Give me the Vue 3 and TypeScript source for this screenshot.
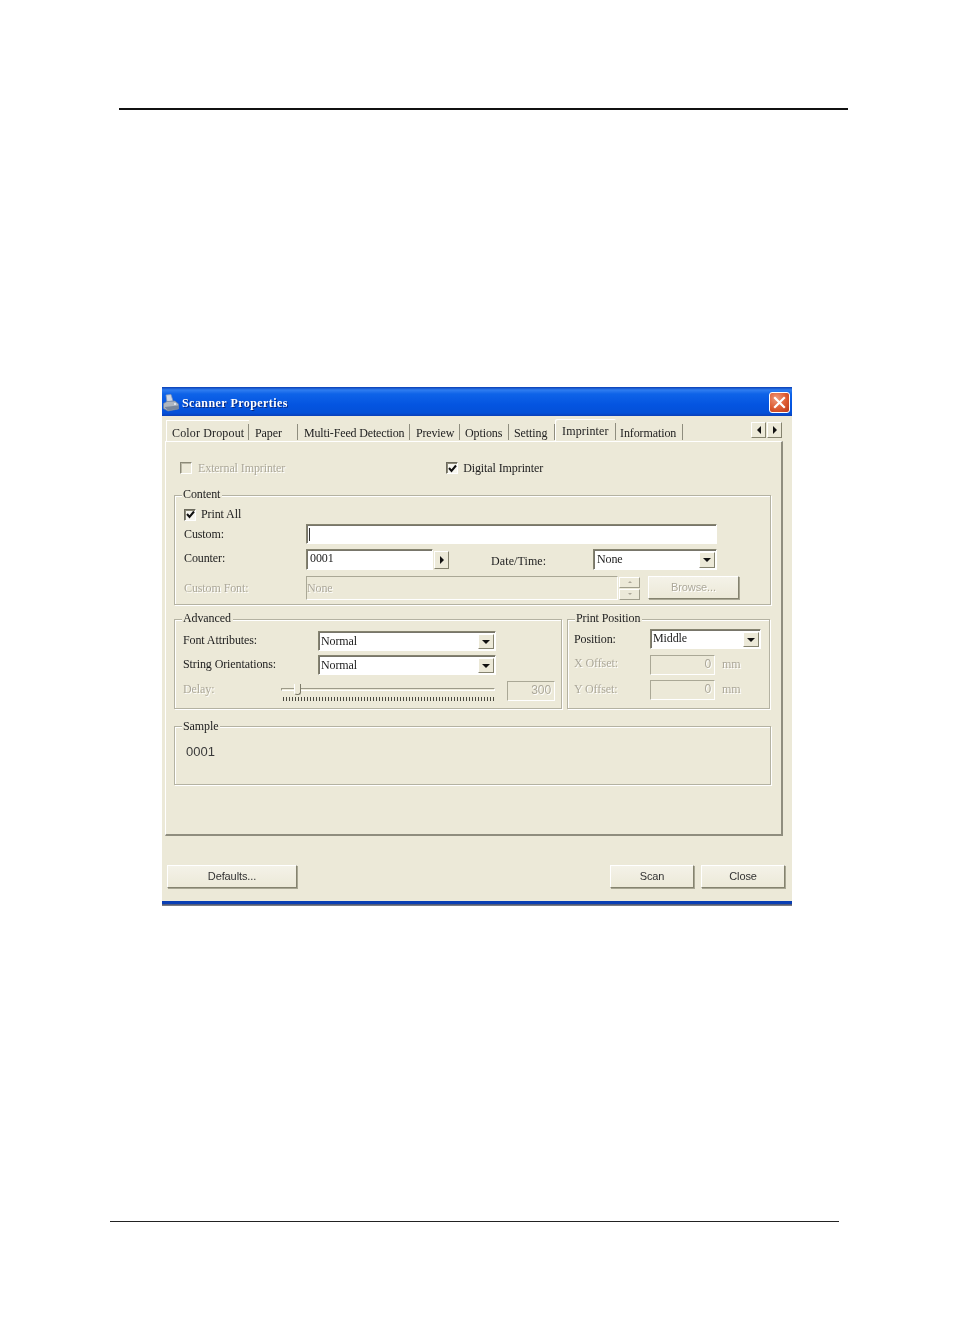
<script setup lang="ts">
interface Tab { label: string; width: number; pad: number; spacing: number; active?: boolean }
const tabs: Tab[] = [
  { label: 'Color Dropout', width: 83, pad: 6, spacing: 0.15 },
  { label: 'Paper', width: 49, pad: 6, spacing: -0.1 },
  { label: 'Multi-Feed Detection', width: 112, pad: 6, spacing: -0.16 },
  { label: 'Preview', width: 50, pad: 6, spacing: -0.16 },
  { label: 'Options', width: 49, pad: 5, spacing: -0.1 },
  { label: 'Setting', width: 46, pad: 5, spacing: -0.1 },
  { label: 'Imprinter', width: 61, pad: 7, spacing: 0.15, active: true },
  { label: 'Information', width: 67, pad: 4, spacing: -0.1 },
]
</script>

<template>
  <div class="page">
    <div class="top-rule"></div>
    <div class="dialog">
      <div class="titlebar">
        <svg class="app-icon" width="16" height="18" viewBox="0 0 16 18">
          <path d="M3 1 L8 0.5 L10 7 L4 8 Z" fill="#cfd6e2" stroke="#8a9ab5" stroke-width=".7" />
          <path d="M0.5 9.5 L4 7.5 L12 7 L15.5 10 L15.5 15 L5 17 L0.5 14.5 Z" fill="#aeb6c0" stroke="#71829c" stroke-width=".7" />
          <path d="M1.5 13 L15 11.5 L15 15 L5 16.5 Z" fill="#78879c" />
          <circle cx="12" cy="10" r="1" fill="#eef2f8" />
        </svg>
        <span class="title">Scanner Properties</span>
        <button class="close" aria-label="Close">
          <svg width="13" height="13" viewBox="0 0 13 13">
            <path d="M2 2 L11 11 M11 2 L2 11" stroke="#fff" stroke-width="2.2" stroke-linecap="square" />
          </svg>
        </button>
      </div>

      <div class="tabs">
        <div
          v-for="t in tabs"
          :key="t.label"
          class="tab"
          :class="{ active: t.active }"
          :style="{ width: t.width + 'px', paddingLeft: t.pad + 'px', letterSpacing: t.spacing + 'px' }"
        >{{ t.label }}</div>
        <div class="tab-scroll">
          <span class="mini-btn"><i class="tri-left"></i></span>
          <span class="mini-btn"><i class="tri-right"></i></span>
        </div>
      </div>

      <div class="panel">
        <div class="top-row">
          <label class="check disabled external"><span class="box"></span>External Imprinter</label>
          <label class="check digital"><span class="box on"><svg width="9" height="9" viewBox="0 0 9 9"><path d="M1 4 L3.5 7 L8 1.5" fill="none" stroke="#111" stroke-width="2" /></svg></span>Digital Imprinter</label>
        </div>

        <section class="group content">
          <span class="legend">Content</span>
          <label class="check printall"><span class="box on"><svg width="9" height="9" viewBox="0 0 9 9"><path d="M1 4 L3.5 7 L8 1.5" fill="none" stroke="#111" stroke-width="2" /></svg></span>Print All</label>
          <div class="row row-custom">
            <span class="lbl">Custom:</span>
            <div class="field white custom-field"><i class="caret"></i></div>
          </div>
          <div class="row row-counter">
            <span class="lbl">Counter:</span>
            <div class="field white counter-field">0001</div>
            <span class="mini-btn counter-btn"><i class="tri-right"></i></span>
            <span class="lbl date-lbl">Date/Time:</span>
            <div class="field white select date-select">None<span class="drop"><i class="tri-down"></i></span></div>
          </div>
          <div class="row row-font">
            <span class="lbl disabled">Custom Font:</span>
            <div class="field flat font-field">None</div>
            <div class="spin">
              <span class="spin-btn"><i class="tri-up"></i></span>
              <span class="spin-btn"><i class="tri-down small"></i></span>
            </div>
            <span class="btn browse">Browse...</span>
          </div>
        </section>

        <div class="split">
          <section class="group advanced">
            <span class="legend">Advanced</span>
            <div class="row row-adv">
              <span class="lbl adv-lbl">Font Attributes:</span>
              <div class="field white select adv-select">Normal<span class="drop"><i class="tri-down"></i></span></div>
            </div>
            <div class="row row-adv second">
              <span class="lbl adv-lbl">String Orientations:</span>
              <div class="field white select adv-select">Normal<span class="drop"><i class="tri-down"></i></span></div>
            </div>
            <div class="row row-delay">
              <span class="lbl disabled delay-lbl">Delay:</span>
              <div class="slider">
                <span class="track"></span>
                <span class="thumb"></span>
                <span class="ticks"></span>
              </div>
              <div class="field flat num delay-field">300</div>
            </div>
          </section>

          <section class="group position">
            <span class="legend">Print Position</span>
            <div class="row row-pos">
              <span class="lbl pos-lbl">Position:</span>
              <div class="field white select pos-select">Middle<span class="drop"><i class="tri-down"></i></span></div>
            </div>
            <div class="row row-off first">
              <span class="lbl disabled pos-lbl off-lbl">X Offset:</span>
              <div class="field flat num off-field">0</div>
              <span class="unit">mm</span>
            </div>
            <div class="row row-off">
              <span class="lbl disabled pos-lbl off-lbl">Y Offset:</span>
              <div class="field flat num off-field">0</div>
              <span class="unit">mm</span>
            </div>
          </section>
        </div>

        <section class="group sample">
          <span class="legend">Sample</span>
          <div class="sample-text">0001</div>
        </section>
      </div>

      <div class="footer">
        <span class="btn defaults">Defaults...</span>
        <span class="spacer"></span>
        <span class="btn scan">Scan</span>
        <span class="btn closebtn">Close</span>
      </div>
      <div class="bottom-bar"></div>
    </div>
    <div class="bottom-rule"></div>
  </div>
</template>

<style>
html, body { margin: 0; background: #fff; }
</style>

<style scoped>
.page {
  width: 954px;
  height: 1336px;
  box-sizing: border-box;
  padding-top: 108px;
  overflow: hidden;
  background: #fff;
}
.top-rule { width: 729px; height: 2px; margin-left: 119px; background: #111; }
.bottom-rule { width: 729px; height: 1px; margin: 315px 0 0 110px; background: #222; }

.dialog {
  width: 630px;
  height: 519px;
  margin: 277px 0 0 162px;
  background: #ece9d8;
  display: flex;
  flex-direction: column;
  font: 12px "Liberation Serif", serif;
  letter-spacing: -0.1px;
  color: #222;
  filter: blur(0.35px);
}

.titlebar {
  height: 29px;
  flex: none;
  display: flex;
  align-items: center;
  background: linear-gradient(#0a3fb4 0, #2f7df0 3px, #0e63e8 7px, #0454e0 18px, #0450d8 26px, #0a3fb8 29px);
}
.app-icon { margin: 3px 3px 0 1px; flex: none; }
.title {
  margin-top: 4px;
  color: #fff;
  font-weight: 700;
  font-size: 12px;
  letter-spacing: 0.45px;
  text-shadow: 1px 1px 0 #0a2a80;
}
.close {
  margin: 1px 2px 0 auto;
  width: 21px;
  height: 21px;
  padding: 0;
  display: flex;
  align-items: center;
  justify-content: center;
  border: 1px solid #fff;
  border-radius: 3px;
  background: radial-gradient(circle at 35% 30%, #ef9a7c, #dc5a30 55%, #b8371b);
}

.tabs {
  height: 21px;
  margin-top: 4px;
  padding-left: 4px;
  flex: none;
  display: flex;
  align-items: stretch;
  position: relative;
}
.tab {
  box-sizing: border-box;
  padding-top: 7px;
  line-height: 13px;
  white-space: nowrap;
  position: relative;
}
.tab::after {
  content: "";
  position: absolute;
  right: 0;
  top: 4px;
  bottom: 1px;
  width: 1px;
  background: #8f8d7e;
}
.tab.active {
  padding-top: 6px;
  margin-top: -1px;
  border-radius: 2px 2px 0 0;
  box-shadow: inset 1px 1px 0 #fff;
}
.tab:first-child { box-shadow: inset 1px 1px 0 #fff; }
.tab-scroll {
  position: absolute;
  left: 589px;
  top: 2px;
  display: flex;
  gap: 1px;
}
.mini-btn {
  box-sizing: border-box;
  width: 15px;
  height: 16px;
  display: flex;
  align-items: center;
  justify-content: center;
  background: #ece9d8;
  border: 1px solid;
  border-color: #fff #85836f #85836f #fff;
}
i { display: block; width: 0; height: 0; border-style: solid; border-color: transparent; }
.tri-left { border-width: 4px 4px 4px 0; border-right-color: #111; }
.tri-right { border-width: 4px 0 4px 4px; border-left-color: #111; }
.tri-down { border-width: 4px 4px 0; border-top-color: #111; }
.tri-down.small { border-width: 2px 2px 0; border-top-color: #aca899; }
.tri-up { border-width: 0 2px 2px; border-bottom-color: #aca899; }

.panel {
  box-sizing: border-box;
  width: 618px;
  height: 395px;
  margin-left: 3px;
  flex: none;
  padding: 18px 0 0 8px;
  border-top: 1px solid #fff;
  border-left: 1px solid #fff;
  border-right: 2px solid #8f8d7e;
  border-bottom: 2px solid #8f8d7e;
}

.top-row { height: 16px; display: flex; align-items: center; position: relative; }
.check { display: flex; align-items: center; white-space: nowrap; }
.external { margin-left: 6px; }
.digital { margin-left: 161px; }
.disabled { color: #aca899; text-shadow: 1px 1px 0 #fff; }
.box {
  box-sizing: border-box;
  width: 12px;
  height: 12px;
  margin-right: 6px;
  display: flex;
  align-items: center;
  justify-content: center;
  border: 1px solid;
  border-color: #8b8977 #fff #fff #8b8977;
  box-shadow: inset 1px 1px 0 #bdbaa8;
  flex: none;
}
.box.on { background: #f7f6ef; border-color: #6c6a5d #fff #fff #6c6a5d; box-shadow: inset 1px 1px 0 #8b8977; margin-right: 5px; }

.group {
  box-sizing: border-box;
  position: relative;
  border: 1px solid #b4b2a2;
  box-shadow: 1px 1px 0 #fff, inset 1px 1px 0 #fff;
}
.legend {
  position: absolute;
  left: 7px;
  top: -9px;
  padding: 0 2px 0 1px;
  line-height: 14px;
  background: #ece9d8;
}
.sample .legend { top: -8px; }

.row { display: flex; align-items: center; }
.lbl { white-space: nowrap; flex: none; }

.content { width: 597px; height: 110px; margin-top: 19px; padding: 12px 0 0 9px; }
.printall { height: 13px; }
.printall .box { margin-right: 5px; }
.row-custom { height: 20px; margin-top: 3px; }
.row-custom .lbl, .row-counter > .lbl:first-child, .row-font .lbl { width: 122px; }
.row-counter > .lbl:first-child { margin-bottom: 2px; }
.row-counter { height: 21px; margin-top: 5px; }
.row-font { height: 24px; margin-top: 6px; }

.field {
  box-sizing: border-box;
  height: 100%;
  padding-left: 2px;
  display: flex;
  align-items: center;
  border: 1px solid;
  border-color: #85836f #fff #fff #85836f;
  box-shadow: inset 1px 1px 0 #77756a;
  white-space: nowrap;
  position: relative;
}
.white { background: #fff; }
.flat {
  color: #aca899;
  text-shadow: 1px 1px 0 #fff;
  padding-left: 0;
  border-color: #aaa896 #fff #fff #aaa896;
  box-shadow: none;
}
.custom-field { width: 411px; }
.caret { width: 1px; height: 13px; background: #333; border: 0; }
.counter-field { width: 127px; padding-left: 3px; padding-bottom: 2px; }
.counter-btn { margin-left: 1px; height: 18px; }
.date-lbl { width: 102px; margin-left: 42px; margin-top: 3px; letter-spacing: .1px; }
.date-select { width: 124px; padding-left: 3px; }
.select .drop {
  position: absolute;
  right: 1px;
  top: 2px;
  bottom: 1px;
  width: 16px;
  box-sizing: border-box;
  display: flex;
  align-items: center;
  justify-content: center;
  background: #ece9d8;
  border: 1px solid;
  border-color: #fff #85836f #85836f #fff;
}
.font-field { width: 312px; }
.spin { width: 21px; height: 23px; margin-left: 1px; display: flex; flex-direction: column; gap: 1px; }
.spin-btn {
  flex: 1;
  display: flex;
  align-items: center;
  justify-content: center;
  background: #ece9d8;
  border: 1px solid;
  border-color: #fff #a09e8c #a09e8c #fff;
}

.btn {
  box-sizing: border-box;
  display: flex;
  align-items: center;
  justify-content: center;
  padding-bottom: 2px;
  background: linear-gradient(#f4f2e8, #ece9d8);
  border: 1px solid;
  border-color: #fff #85836f #85836f #fff;
  box-shadow: 1px 1px 0 #a8a693;
  font: 11px "Liberation Sans", sans-serif;
  color: #333;
  white-space: nowrap;
}
.browse {
  width: 91px;
  height: 23px;
  margin-left: 8px;
  margin-top: -1px;
  color: #aca899;
  text-shadow: 1px 1px 0 #fff;
}

.split { display: flex; gap: 5px; margin-top: 14px; }
.advanced { width: 388px; height: 90px; padding: 11px 0 0 8px; }
.row-adv { height: 20px; }
.row-adv.second { margin-top: 4px; }
.adv-lbl { width: 135px; margin-bottom: 2px; }
.adv-select { width: 178px; }
.row-delay { height: 20px; margin-top: 6px; }
.delay-lbl { width: 98px; margin-bottom: 4px; }
.slider { position: relative; width: 214px; height: 20px; flex: none; }
.track {
  position: absolute;
  left: 0;
  right: 0;
  top: 7px;
  height: 3px;
  background: #ece9d8;
  border: 1px solid;
  border-color: #9d9b89 #fff #fff #9d9b89;
  box-sizing: border-box;
}
.thumb {
  position: absolute;
  left: 13px;
  top: 3px;
  width: 5px;
  height: 10px;
  background: #ece9d8;
  border-right: 1px solid #7d7b6a;
  border-bottom: 1px solid #7d7b6a;
  border-left: 1px solid #fff;
  border-radius: 0 0 3px 3px;
}
.ticks {
  position: absolute;
  left: 2px;
  right: 0;
  top: 16px;
  height: 4px;
  background: repeating-linear-gradient(90deg, #4a4940 0 1px, transparent 1px 3px);
}
.delay-field { width: 48px; margin-left: 12px; }
.num { justify-content: flex-end; padding-right: 3px; padding-bottom: 2px; font-size: 12px; font-family: "Liberation Sans", sans-serif; }

.position { width: 203px; height: 90px; padding: 9px 0 0 6px; }
.row-pos { height: 20px; }
.pos-lbl { width: 76px; }
.off-lbl { margin-bottom: 2px; }
.first .off-lbl { margin-bottom: 4px; }
.pos-select { width: 111px; padding-bottom: 1px; }
.row-off { height: 20px; margin-top: 5px; }
.row-off.first { margin-top: 6px; }
.off-field { width: 65px; }
.unit { margin: 0 0 2px 7px; color: #aca899; text-shadow: 1px 1px 0 #fff; }

.sample { width: 597px; height: 59px; margin-top: 17px; padding: 17px 0 0 11px; }
.sample-text { font: 13px/16px "Liberation Sans", sans-serif; letter-spacing: 0; color: #3a3a3a; }

.footer {
  height: 23px;
  margin-top: 29px;
  padding: 0 7px 0 5px;
  flex: none;
  display: flex;
}
.spacer { flex: 1; }
.defaults { width: 130px; }
.scan { width: 84px; }
.closebtn { width: 84px; margin-left: 7px; }

.bottom-bar {
  height: 5px;
  margin-top: 13px;
  flex: none;
  background: linear-gradient(#0a3fb4 0 3px, #3c4a78 3px, #8c8c88 5px);
}
</style>
